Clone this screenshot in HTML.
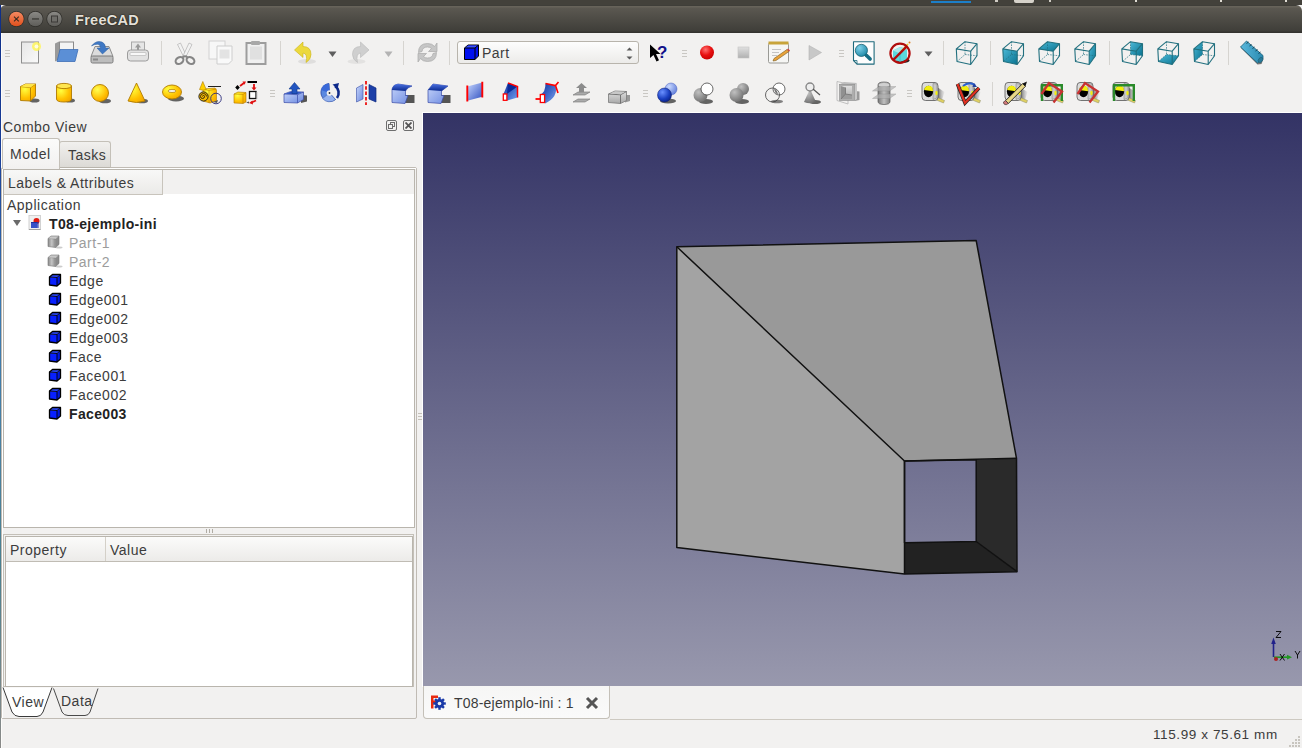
<!DOCTYPE html>
<html><head><meta charset="utf-8">
<style>
*{box-sizing:border-box}
html,body{margin:0;padding:0;width:1302px;height:748px;overflow:hidden;background:#f2f1f0;font-family:"Liberation Sans",sans-serif;color:#3c3c3c}
.a{position:absolute}
#toppanel{left:0;top:0;width:1302px;height:5px;background:#43413b}
#title{left:0;top:5px;width:1302px;height:28px;background:linear-gradient(#3f3e39 0px,#3f3e39 1px,#67635a 1px,#67635a 2px,#5b5851 3px,#3f3e39 26px,#34332f 27px);border-radius:6px 6px 0 0}
#leftstrip{left:0;top:5px;width:1px;height:743px;background:linear-gradient(#0e2e88 0%,#1a3e98 20%,#3a78b0 40%,#4a80a0 60%,#4a8090 75%,#8a8a88 100%)}
.wbtn{width:16px;height:16px;border-radius:50%;top:11px}
.ttl{left:75px;top:11.5px;font-size:14.5px;font-weight:bold;color:#e4e0d8;letter-spacing:0.3px;text-shadow:0 0 1.5px #1a1916,0 0 1px #1a1916}
#view{left:423px;top:113px;width:879px;height:573px;background:linear-gradient(#333365,#9898ad)}
.txt{font-size:14px;letter-spacing:0.5px;white-space:nowrap;line-height:17px}
</style></head><body>
<div class="a" id="toppanel"></div>
<div class="a" style="left:931px;top:1px;width:40px;height:2px;background:#1d7fc8"></div>
<div class="a" style="left:1014px;top:0;width:20px;height:3px;border-radius:0 0 2px 2px;background:#d6d2ca"></div>
<div class="a" style="left:995px;top:0;width:3px;height:2px;background:#cfcbc3"></div>
<div class="a" style="left:1049px;top:0;width:2px;height:2px;background:#cfcbc3"></div>
<div class="a" style="left:1135px;top:0;width:2px;height:2px;background:#e0dcd4"></div>
<div class="a" style="left:1220px;top:0;width:2px;height:2px;background:#e0dcd4"></div>
<div class="a" style="left:1285px;top:0;width:2px;height:2px;background:#e0dcd4"></div>
<div class="a" id="title"></div>
<div class="a" id="leftstrip"></div>
<svg class="a" style="left:0;top:5px" width="70" height="28">
<defs><linearGradient id="wclose" x1="0" y1="0" x2="0" y2="1"><stop offset="0" stop-color="#f58a62"/><stop offset="1" stop-color="#e0501c"/></linearGradient>
<linearGradient id="wgray" x1="0" y1="0" x2="0" y2="1"><stop offset="0" stop-color="#8a8985"/><stop offset="1" stop-color="#5e5d59"/></linearGradient></defs>
<circle cx="16.4" cy="14" r="8" fill="#2f2e2a"/><circle cx="16.4" cy="14" r="7.3" fill="url(#wclose)"/>
<path d="M14 11.6 L18.8 16.4 M18.8 11.6 L14 16.4" stroke="#3a2a20" stroke-width="1.1"/>
<circle cx="35.4" cy="14" r="8" fill="#2f2e2a"/><circle cx="35.4" cy="14" r="7.3" fill="url(#wgray)"/>
<rect x="32" y="13.3" width="7" height="1.3" fill="#3a3936"/>
<circle cx="54.4" cy="14" r="8" fill="#2f2e2a"/><circle cx="54.4" cy="14" r="7.3" fill="url(#wgray)"/>
<rect x="51.5" y="11" width="6" height="6" fill="#6e6d69" stroke="#3a3936" stroke-width="1"/>
</svg>
<div class="a ttl">FreeCAD</div>

<svg class="a" style="left:0;top:0" width="1302" height="113"><defs>
<linearGradient id="gpaper" x1="0" y1="0" x2="1" y2="1"><stop offset="0" stop-color="#e6e6e6"/><stop offset="1" stop-color="#fafafa"/></linearGradient>
<radialGradient id="gred" cx="0.4" cy="0.3" r="0.8"><stop offset="0" stop-color="#ff7070"/><stop offset="0.5" stop-color="#e81010"/><stop offset="1" stop-color="#c00000"/></radialGradient>
<linearGradient id="ggray" x1="0" y1="0" x2="0" y2="1"><stop offset="0" stop-color="#e0e0e0"/><stop offset="1" stop-color="#b0b0b0"/></linearGradient>
<radialGradient id="gteal" cx="0.35" cy="0.3" r="0.8"><stop offset="0" stop-color="#7fd0e8"/><stop offset="1" stop-color="#1784a2"/></radialGradient>
<linearGradient id="gcube" x1="0" y1="0" x2="1" y2="1"><stop offset="0" stop-color="#4bb8d6"/><stop offset="1" stop-color="#0a7390"/></linearGradient>
<radialGradient id="gyel" cx="0.3" cy="0.3" r="0.9"><stop offset="0" stop-color="#ffff40"/><stop offset="0.6" stop-color="#ffc000"/><stop offset="1" stop-color="#f0a000"/></radialGradient>
<radialGradient id="gyelr" cx="0.35" cy="0.3" r="0.8"><stop offset="0" stop-color="#ffff50"/><stop offset="0.7" stop-color="#ffbb00"/><stop offset="1" stop-color="#f0a000"/></radialGradient>
<linearGradient id="gblue2" x1="0" y1="0" x2="1" y2="1"><stop offset="0" stop-color="#c8d8ff"/><stop offset="1" stop-color="#3050c0"/></linearGradient>
<linearGradient id="gblue3" x1="0" y1="0" x2="1" y2="1"><stop offset="0" stop-color="#1030a0"/><stop offset="1" stop-color="#70a0f0"/></linearGradient>
<linearGradient id="ggray2" x1="0" y1="0" x2="0" y2="1"><stop offset="0" stop-color="#e0e0e0"/><stop offset="1" stop-color="#a8a8a8"/></linearGradient>
<radialGradient id="gblueL" cx="0.35" cy="0.3" r="0.8"><stop offset="0" stop-color="#c8d8ff"/><stop offset="1" stop-color="#5a78d8"/></radialGradient>
<radialGradient id="gblueD" cx="0.35" cy="0.3" r="0.8"><stop offset="0" stop-color="#6a90ff"/><stop offset="0.6" stop-color="#1a3fc0"/><stop offset="1" stop-color="#081e80"/></radialGradient>
<radialGradient id="ggrayB" cx="0.35" cy="0.3" r="0.8"><stop offset="0" stop-color="#c0c0c0"/><stop offset="1" stop-color="#6a6a6a"/></radialGradient>
<linearGradient id="ggrayC" x1="0" y1="0" x2="1" y2="0"><stop offset="0" stop-color="#777"/><stop offset="0.5" stop-color="#c0c0c0"/><stop offset="1" stop-color="#808080"/></linearGradient>
<linearGradient id="gruler" x1="0" y1="0" x2="1" y2="0"><stop offset="0" stop-color="#5ab8dc"/><stop offset="1" stop-color="#2a8ab0"/></linearGradient>
<linearGradient id="gtapesh" x1="0" y1="0" x2="1" y2="0"><stop offset="0" stop-color="#333"/><stop offset="1" stop-color="#ccc" stop-opacity="0.3"/></linearGradient>
<linearGradient id="gbox" x1="0" y1="0" x2="1" y2="1"><stop offset="0" stop-color="#c8d6fa"/><stop offset="1" stop-color="#6a88e0"/></linearGradient>
<linearGradient id="gbluetop" x1="0" y1="0" x2="0" y2="1"><stop offset="0" stop-color="#4a70e0"/><stop offset="1" stop-color="#0a2a90"/></linearGradient>
</defs><g fill="#c9c7c3"><rect x="5" y="50.0" width="5" height="1"/><rect x="5" y="53.0" width="5" height="1"/><rect x="5" y="56.0" width="5" height="1"/></g>
<g fill="#c9c7c3"><rect x="5" y="90.0" width="5" height="1"/><rect x="5" y="93.0" width="5" height="1"/><rect x="5" y="96.0" width="5" height="1"/></g>
<rect x="161" y="41" width="1" height="24" fill="#d6d4d0"/>
<rect x="280" y="41" width="1" height="24" fill="#d6d4d0"/>
<rect x="403" y="41" width="1" height="24" fill="#d6d4d0"/>
<rect x="449" y="41" width="1" height="24" fill="#d6d4d0"/>
<rect x="943" y="41" width="1" height="24" fill="#d6d4d0"/>
<rect x="990" y="41" width="1" height="24" fill="#d6d4d0"/>
<rect x="1109" y="41" width="1" height="24" fill="#d6d4d0"/>
<rect x="1228" y="41" width="1" height="24" fill="#d6d4d0"/>
<g fill="#c9c7c3"><rect x="682" y="50.0" width="5" height="1"/><rect x="682" y="53.0" width="5" height="1"/><rect x="682" y="56.0" width="5" height="1"/></g>
<g fill="#c9c7c3"><rect x="839" y="50.0" width="5" height="1"/><rect x="839" y="53.0" width="5" height="1"/><rect x="839" y="56.0" width="5" height="1"/></g>
<g fill="#c9c7c3"><rect x="270" y="90.0" width="5" height="1"/><rect x="270" y="93.0" width="5" height="1"/><rect x="270" y="96.0" width="5" height="1"/></g>
<g fill="#c9c7c3"><rect x="643" y="90.0" width="5" height="1"/><rect x="643" y="93.0" width="5" height="1"/><rect x="643" y="96.0" width="5" height="1"/></g>
<g fill="#c9c7c3"><rect x="907" y="90.0" width="5" height="1"/><rect x="907" y="93.0" width="5" height="1"/><rect x="907" y="96.0" width="5" height="1"/></g>
<rect x="992" y="82" width="1" height="24" fill="#d6d4d0"/>
<g transform="translate(18,40.5)"><rect x="3.5" y="1.5" width="17" height="21" fill="url(#gpaper)" stroke="#8e8e8e"/>
<circle cx="18.5" cy="6" r="4.5" fill="#fff65a" opacity="0.85"/><circle cx="18.5" cy="6" r="2" fill="#fffde0"/></g>
<g transform="translate(54,40.5)"><path d="M1 3 L5 1 L5 19 L1 21 Z" fill="#9a9a9a"/>
<rect x="5.5" y="1.5" width="14" height="12" fill="#f4f4f4" stroke="#8a8a8a"/>
<path d="M3 21 L6 9 L24 9 L21 21 Z" fill="#5b8fd6" stroke="#3d6fb6" stroke-width="0.8"/></g>
<g transform="translate(90,40.5)"><path d="M1 16 L5 6 L19 6 L23 16 Z" fill="#dcdcdc" stroke="#8c8c8c"/>
<rect x="1" y="15.5" width="22" height="7" rx="1.5" fill="#bdbdbd" stroke="#7d7d7d"/>
<rect x="3" y="18" width="5" height="2" fill="#8a8a8a"/>
<path d="M1.5 5.5 Q6 -0.5 12 1.5 Q15.5 3 15.5 7.5 L19 7.5 L12.5 13.5 L7 7.5 L10.5 7.5 Q10.5 4.5 8 3.8 Q4.5 3.5 1.5 5.5 Z" fill="#3f78c4" stroke="#2d5f9e" stroke-width="0.5"/></g>
<g transform="translate(126,40.5)"><rect x="5.5" y="1.5" width="13" height="10" fill="#e6e6e6" stroke="#a8a8a8"/>
<path d="M12 3 L15 7 L13 7 L13 10 L11 10 L11 7 L9 7Z" fill="#999"/>
<rect x="1.5" y="9.5" width="21" height="11" rx="3" fill="#e2e2e2" stroke="#9c9c9c"/>
<rect x="4" y="12" width="16" height="3" rx="1" fill="#f8f8f8" stroke="#b0b0b0" stroke-width="0.6"/></g>
<g transform="translate(173,40.5)"><path d="M4.5 4 L7.5 2.5 L13.5 15.5 L11 17 Z" fill="#f2f2f2" stroke="#a8a8a8" stroke-width="0.6"/>
<path d="M16 2.5 L19 4 L12.5 17 L10 15.5 Z" fill="#f2f2f2" stroke="#a8a8a8" stroke-width="0.6"/>
<ellipse cx="6.5" cy="20" rx="4.2" ry="3.1" fill="none" stroke="#858585" stroke-width="2.1" transform="rotate(-35 6.5 20)"/>
<ellipse cx="17.5" cy="20" rx="4.2" ry="3.1" fill="none" stroke="#858585" stroke-width="2.1" transform="rotate(35 17.5 20)"/>
<path d="M9.5 17 Q11 15 12 15.5 Q13 15 14.5 17" stroke="#858585" stroke-width="2" fill="none"/></g>
<g transform="translate(208.5,40.5)"><rect x="0.5" y="0.5" width="16" height="18" fill="#f7f7f7" stroke="#d2d2d2"/>
<path d="M8.5 5.5 L23.5 5.5 L23.5 20 L20 23.5 L8.5 23.5 Z" fill="#f9f9f9" stroke="#cdcdcd"/>
<rect x="11" y="9" width="10" height="9" fill="#e3e3e3"/></g>
<g transform="translate(245,40.5)"><rect x="1.5" y="2.5" width="19" height="21" fill="#f0f0f0" stroke="#9d9d9d" stroke-width="2"/>
<rect x="6" y="0.5" width="9" height="4" rx="1" fill="#a8a8a8"/>
<rect x="5" y="6" width="12" height="13" fill="#e0e0e0"/></g>
<g transform="translate(294,40.5)"><ellipse cx="13" cy="21" rx="9" ry="2.5" fill="#000" opacity="0.08"/>
<path d="M0.5 9.5 L9 1.5 L9 6 Q17 6 17 14 Q17 19 12 22 Q14 13 9 12.5 L9 17 Z" fill="#ecd93c" stroke="#c9b21a" stroke-width="0.6"/></g>
<path d="M328.5 51.5 L336.5 51.5 L332.5 57 Z" fill="#5e5e5e"/>
<g transform="translate(345.5,40.5)"><ellipse cx="11" cy="21" rx="9" ry="2.5" fill="#000" opacity="0.06"/>
<path d="M23.5 9.5 L15 1.5 L15 6 Q7 6 7 14 Q7 19 12 22 Q10 13 15 12.5 L15 17 Z" fill="#cfcfcf" stroke="#b8b8b8" stroke-width="0.6"/></g>
<path d="M384.5 51.5 L392.5 51.5 L388.5 57 Z" fill="#b3b3b3"/>
<g transform="translate(415.5,40.5)"><path d="M3 12 Q3 3 12 3 Q17 3 19 6 L21.5 2.5 L21.5 11 L13 11 L16 8 Q14.5 6.5 12 6.5 Q7 6.5 6.5 11 Z" fill="#c6c6c6" stroke="#a9a9a9" stroke-width="0.7"/>
<path d="M21 12 Q21 21 12 21 Q7 21 5 18 L2.5 21.5 L2.5 13 L11 13 L8 16 Q9.5 17.5 12 17.5 Q17 17.5 17.5 13 Z" fill="#c6c6c6" stroke="#a9a9a9" stroke-width="0.7"/></g>
<g transform="translate(646,40.5)"><path d="M4 4 L4 17.5 L7.5 14.5 L10.5 21 L13 19.8 L10 13.5 L14.5 13.5 Z" fill="#000"/>
<text x="11" y="17.5" font-family="Liberation Sans" font-weight="bold" font-size="17" fill="#12128a">?</text></g>
<g transform="translate(695,40.5)"><circle cx="12" cy="12" r="7" fill="url(#gred)"/></g>
<g transform="translate(731.5,40.5)"><rect x="6.5" y="6.5" width="11" height="11" fill="url(#ggray)" stroke="#c4c4c4" stroke-width="0.6"/></g>
<g transform="translate(767,40.5)"><rect x="1.5" y="2.5" width="20" height="20" rx="1.5" fill="#f6f6f4" stroke="#9a9a96"/>
<rect x="1.5" y="1" width="20" height="3" fill="#c8a43a"/>
<path d="M5 9 H14 M5 12 H12 M5 15 H10" stroke="#b8b8b8" stroke-width="0.8"/>
<path d="M7 18 L20 9 L22 11 L9 20 L6 20.5 Z" fill="#e8a23a" stroke="#7b5a1e" stroke-width="0.6"/>
<path d="M20 9 L22 11 L23 10 L21 8 Z" fill="#d04040"/></g>
<g transform="translate(803,40.5)"><path d="M6 5 L18.5 12 L6 19.5 Z" fill="#c8c8c8" stroke="#b4b4b4" stroke-width="0.6"/></g>
<g transform="translate(851.5,40.5)"><path d="M2 1.2 L22.6 1.2 L22.6 23.6 L5.5 23.6 L2 20 Z" fill="#fdfdfd" stroke="#1f6a7c" stroke-width="1.1" stroke-linejoin="round"/>
<path d="M2 20 L5.5 20 L5.5 23.6" fill="none" stroke="#1f6a7c" stroke-width="0.8"/>
<circle cx="9.9" cy="9.9" r="6.1" fill="url(#gteal)" stroke="#0f5566" stroke-width="0.7"/>
<path d="M14.8 14.8 L18.6 18.6" stroke="#156d84" stroke-width="3.6" stroke-linecap="round"/></g>
<g transform="translate(888,40.5)"><ellipse cx="15" cy="20" rx="6.5" ry="2.6" fill="#222"/>
<path d="M5 10 L12 6.5 L19 8.5 L19 19 L12 21.5 L5 18.5 Z" fill="#5cd8dc"/>
<path d="M5 10 L12 13 L19 8.5 L12 6.5 Z" fill="#a8e6e8"/>
<path d="M12 13 L12 21.5" stroke="#3ab0b8" stroke-width="0.6"/>
<path d="M13 11 L20 3.5" stroke="#f0d020" stroke-width="1.6"/><circle cx="21.5" cy="2" r="1" fill="#e08020"/>
<circle cx="12" cy="12.7" r="9.6" fill="none" stroke="#b00c0c" stroke-width="2.2"/>
<path d="M5.2 19.5 L18.8 5.9" stroke="#b00c0c" stroke-width="2.4"/></g>
<path d="M924.5 51.5 L932.5 51.5 L928.5 56.5 Z" fill="#5e5e5e"/>
<g transform="translate(953,40.5)"><polyline points="3.3,8.4 12,1.2 24,3.2 24,15.3 17.7,24 4,21 3.3,8.4 17.7,10.7 17.7,24" fill="none" stroke="#22707f" stroke-width="1.1" stroke-linejoin="round"/><path d="M17.7,10.7 L24,3.2" stroke="#22707f" stroke-width="1.1"/><path d="M12,1.2 L12,14 L4,21 M12,14 L24,15.3" stroke="#22707f" stroke-width="0.7" stroke-dasharray="1.6,1.1" fill="none"/></g>
<g transform="translate(999.5,40.5)"><polygon points="3.3,8.4 17.7,10.7 17.7,24 4,21" fill="url(#gcube)"/><polyline points="3.3,8.4 12,1.2 24,3.2 24,15.3 17.7,24 4,21 3.3,8.4 17.7,10.7 17.7,24" fill="none" stroke="#22707f" stroke-width="1.1" stroke-linejoin="round"/><path d="M17.7,10.7 L24,3.2" stroke="#22707f" stroke-width="1.1"/><path d="M12,1.2 L12,14 L4,21 M12,14 L24,15.3" stroke="#22707f" stroke-width="0.7" stroke-dasharray="1.6,1.1" fill="none"/></g>
<g transform="translate(1035.5,40.5)"><polygon points="12,1.2 24,3.2 17.7,10.7 3.3,8.4" fill="url(#gcube)"/><polyline points="3.3,8.4 12,1.2 24,3.2 24,15.3 17.7,24 4,21 3.3,8.4 17.7,10.7 17.7,24" fill="none" stroke="#22707f" stroke-width="1.1" stroke-linejoin="round"/><path d="M17.7,10.7 L24,3.2" stroke="#22707f" stroke-width="1.1"/><path d="M12,1.2 L12,14 L4,21 M12,14 L24,15.3" stroke="#22707f" stroke-width="0.7" stroke-dasharray="1.6,1.1" fill="none"/></g>
<g transform="translate(1071.5,40.5)"><polygon points="17.7,10.7 24,3.2 24,15.3 17.7,24" fill="url(#gcube)"/><polyline points="3.3,8.4 12,1.2 24,3.2 24,15.3 17.7,24 4,21 3.3,8.4 17.7,10.7 17.7,24" fill="none" stroke="#22707f" stroke-width="1.1" stroke-linejoin="round"/><path d="M17.7,10.7 L24,3.2" stroke="#22707f" stroke-width="1.1"/><path d="M12,1.2 L12,14 L4,21 M12,14 L24,15.3" stroke="#22707f" stroke-width="0.7" stroke-dasharray="1.6,1.1" fill="none"/></g>
<g transform="translate(1118.5,40.5)"><polygon points="12,1.2 24,3.2 24,15.3 12,14" fill="url(#gcube)"/><polyline points="3.3,8.4 12,1.2 24,3.2 24,15.3 17.7,24 4,21 3.3,8.4 17.7,10.7 17.7,24" fill="none" stroke="#22707f" stroke-width="1.1" stroke-linejoin="round"/><path d="M17.7,10.7 L24,3.2" stroke="#22707f" stroke-width="1.1"/><path d="M12,1.2 L12,14 L4,21 M12,14 L24,15.3" stroke="#22707f" stroke-width="0.7" stroke-dasharray="1.6,1.1" fill="none"/></g>
<g transform="translate(1154.5,40.5)"><polygon points="4,21 17.7,24 24,15.3 12,14" fill="url(#gcube)"/><polyline points="3.3,8.4 12,1.2 24,3.2 24,15.3 17.7,24 4,21 3.3,8.4 17.7,10.7 17.7,24" fill="none" stroke="#22707f" stroke-width="1.1" stroke-linejoin="round"/><path d="M17.7,10.7 L24,3.2" stroke="#22707f" stroke-width="1.1"/><path d="M12,1.2 L12,14 L4,21 M12,14 L24,15.3" stroke="#22707f" stroke-width="0.7" stroke-dasharray="1.6,1.1" fill="none"/></g>
<g transform="translate(1190.5,40.5)"><polygon points="12,1.2 3.3,8.4 4,21 12,14" fill="url(#gcube)"/><polyline points="3.3,8.4 12,1.2 24,3.2 24,15.3 17.7,24 4,21 3.3,8.4 17.7,10.7 17.7,24" fill="none" stroke="#22707f" stroke-width="1.1" stroke-linejoin="round"/><path d="M17.7,10.7 L24,3.2" stroke="#22707f" stroke-width="1.1"/><path d="M12,1.2 L12,14 L4,21 M12,14 L24,15.3" stroke="#22707f" stroke-width="0.7" stroke-dasharray="1.6,1.1" fill="none"/></g>
<g transform="translate(1239.5,40.5)"><path d="M1 7 L7 3 L24 18 L22 23.5 L18 24 Z" fill="#555" opacity="0.8"/>
<path d="M1 6.5 L7 0.5 L23.5 15 L23.5 18 L18 22.5 Z" fill="url(#gruler)" stroke="#1a5f78" stroke-width="0.8"/>
<path d="M7 3 L9 1.5 M10 5.5 L12 4 M13 8 L15 6.5 M16 10.5 L18 9 M19 13 L21 11.5" stroke="#103848" stroke-width="0.9"/>
<ellipse cx="21" cy="19.5" rx="2" ry="2.8" fill="#2a7a98" stroke="#1a5f78" stroke-width="0.6" transform="rotate(40 21 19.5)"/></g>
<g transform="translate(17.5,81)"><ellipse cx="17" cy="19.5" rx="5" ry="2" fill="#333" opacity="0.75"/><path d="M3 5.5 L8 3 L18 3 L18 15 L13 20 L3 19.5 Z" fill="url(#gyel)" stroke="#b07a00" stroke-width="0.9"/>
<path d="M3 5.5 L13 6.5 L18 3 M13 6.5 L13 20" stroke="#b07a00" stroke-width="0.9" fill="none"/>
<path d="M3 5.5 L13 6.5 L18 3 L8 3 Z" fill="#ffe54a"/></g>
<g transform="translate(53,81)"><ellipse cx="17" cy="19.5" rx="5" ry="2" fill="#333" opacity="0.75"/><path d="M3.5 5 L3.5 18 Q3.5 21 11 21 Q18.5 21 18.5 18 L18.5 5 Z" fill="url(#gyel)" stroke="#b07a00" stroke-width="0.9"/>
<ellipse cx="11" cy="5" rx="7.5" ry="2.6" fill="#ffe650" stroke="#b07a00" stroke-width="0.9"/></g>
<g transform="translate(89,81)"><ellipse cx="16" cy="20" rx="6" ry="2.3" fill="#333" opacity="0.75"/><circle cx="11" cy="12" r="8.5" fill="url(#gyelr)" stroke="#b07a00" stroke-width="0.9"/></g>
<g transform="translate(125,81)"><ellipse cx="17" cy="20" rx="6" ry="2.3" fill="#333" opacity="0.75"/><path d="M11.5 2 L3 20 Q11 23 20 20 Z" fill="url(#gyel)" stroke="#b07a00" stroke-width="0.9"/></g>
<g transform="translate(161,81)"><ellipse cx="15" cy="17.5" rx="8" ry="3" fill="#333" opacity="0.75"/><ellipse cx="11" cy="11" rx="9.5" ry="7" fill="url(#gyel)" stroke="#b07a00" stroke-width="0.9"/>
<ellipse cx="11" cy="10" rx="4" ry="1.6" fill="#f2f0e8" stroke="#b07a00" stroke-width="0.7"/></g>
<g transform="translate(197,81)"><path d="M6 8 L18 7 L19.5 9 L19.5 20 L13 22 L6 20 Z" fill="url(#gyel)" stroke="#b07a00" stroke-width="0.6"/>
<path d="M6 8 L12 9.5 L19.5 8 M12 9.5 V22" stroke="#b07a00" stroke-width="0.5" fill="none"/>
<path d="M5.8 0.5 L2.5 8.5 Q6 10 9.2 8.5 Z" fill="#ffd000" stroke="#b07a00" stroke-width="0.6"/>
<path d="M11 5.5 H24" stroke="#222" stroke-width="1"/>
<circle cx="6.5" cy="15.5" r="4.6" fill="#f5b800" stroke="#111" stroke-width="0.9"/>
<path d="M6.5 15.5 m-1 0 a1 1 0 1 1 2 0 a2 2 0 1 1 -4 0 a3 3 0 1 1 6 0" stroke="#111" stroke-width="0.8" fill="none"/>
<path d="M16 21 L21 19 L20 22 Z" fill="#555"/>
<circle cx="19" cy="17.5" r="5.3" fill="none" stroke="#2a2a7a" stroke-width="0.9"/></g>
<g transform="translate(233,81)"><path d="M1 13 L5 11 L13 11.5 L13 21 L10 22.5 L1 22 Z" fill="url(#gyel)" stroke="#b07a00" stroke-width="0.6"/>
<path d="M1 13 L10 13.5 L13 11.5 M10 13.5 V22.5" stroke="#b07a00" stroke-width="0.5" fill="none"/>
<path d="M13 21.5 L16 20.5 L16 22.5 Z" fill="#555"/>
<path d="M4.5 4 L6.8 6.5 L4.5 9 L2.2 6.5 Z" fill="#000"/>
<path d="M7 5 L11 2" stroke="#e01010" stroke-width="1.8"/><path d="M9.5 0.5 L13 0.5 L11.5 3.8Z" fill="#e01010"/>
<path d="M14.5 1 H24" stroke="#000" stroke-width="2"/>
<path d="M21 3 V7" stroke="#e01010" stroke-width="1.8"/><path d="M18.5 6.5 L23.5 6.5 L21 9.5Z" fill="#e01010"/>
<rect x="16.5" y="10.5" width="6.5" height="7" fill="#fff" stroke="#111" stroke-width="1.3"/>
<rect x="23.2" y="11" width="1" height="7" fill="#999"/>
<path d="M23 19.5 L18.5 21.5" stroke="#e01010" stroke-width="1.8"/><path d="M19.5 19.5 L16 22 L20 23.5Z" fill="#e01010"/></g>
<g transform="translate(282,81)"><path d="M19 14 L25 14.5 L25 20.5 L19 22 Z" fill="#555"/>
<path d="M2 13 L8.5 10.5 L21.5 11 L21.5 18.5 L15.5 22 L2 21.5 Z" fill="url(#gbox)" stroke="#3a4aa8" stroke-width="0.7"/>
<path d="M2 13 L15.5 13.7 L21.5 11 M15.5 13.7 L15.5 22" stroke="#3a4aa8" stroke-width="0.7" fill="none"/>
<path d="M3 12.8 L8.7 10.8 L20 11.3 L15.3 13.3 Z" fill="#2a50c0"/>
<path d="M10 12.5 L10 8 L7 8 L12.5 1.5 L18 8 L15 8 L15 12.5 Z" fill="#2255c0" stroke="#123a8a" stroke-width="0.6"/></g>
<g transform="translate(318,81)"><path d="M11 2.5 A9 9 0 1 0 17.5 18.5 L11.5 12 Z" fill="#5a88e0" stroke="#1d3b9a" stroke-width="0.7"/>
<path d="M4.5 17.5 A9 9 0 0 0 17.5 18.5 L11.5 12 Z" fill="#95b2ee" stroke="#4060b0" stroke-width="0.5"/>
<path d="M11 2.5 A9 9 0 0 0 3 9 L11.5 12 Z" fill="#3a6ad8"/>
<circle cx="11.5" cy="12" r="2.8" fill="#f2f1f0"/><circle cx="11.5" cy="12" r="0.9" fill="#222"/>
<path d="M17 5 A8.5 8.5 0 0 1 19 17" stroke="#0e2a8a" stroke-width="2.6" fill="none"/><path d="M14.5 3.5 L21 2 L19.5 8 Z" fill="#0e2a8a"/></g>
<g transform="translate(354,81)"><path d="M2.5 7 L9 3.5 L9 18 L2.5 21 Z" fill="url(#gbox)" stroke="#4a60b0" stroke-width="0.7"/>
<path d="M15 3.5 L22 7 L22 21 L15 18 Z" fill="#1c3fa8" stroke="#0e2a80" stroke-width="0.7"/>
<path d="M12 0 V24" stroke="#ee1010" stroke-width="1.8" stroke-dasharray="3.5,1.8"/></g>
<g transform="translate(390,81)"><path d="M14 14 L24.5 14 L24.5 22 L14 22 Z" fill="#555"/>
<path d="M2 8 Q3 3.5 8 3 L22 5 Q17 6.5 15.5 10 L15.5 14.5 L18 14.5 L15 22.5 L2 21.5 Z" fill="url(#gbox)" stroke="#3a4aa8" stroke-width="0.7"/>
<path d="M2 8 Q3 3.5 8 3 L22 5 Q17 6.5 15.5 10 L2 9 Z" fill="url(#gbluetop)"/></g>
<g transform="translate(426,81)"><path d="M14 14 L24.5 14 L24.5 22 L14 22 Z" fill="#555"/>
<path d="M2 9 L7 3 L22 5 L15.5 10 L15.5 14.5 L18 14.5 L15 22.5 L2 21.5 Z" fill="url(#gbox)" stroke="#3a4aa8" stroke-width="0.7"/>
<path d="M2 9 L7 3 L22 5 L15.5 10 Z" fill="url(#gbluetop)"/></g>
<g transform="translate(462,81)"><path d="M5.3 5.5 L20.3 1.6 L20.3 15.8 L5.3 19.7 Z" fill="url(#gblue2)"/>
<path d="M5.3 4.5 V20.5 M20.3 0.8 V16.5" stroke="#ff0000" stroke-width="1.9"/></g>
<g transform="translate(498,81)"><path d="M10 2 L19.5 5.5 L19.5 16.5 L9 19.5 L5.5 13 Z" fill="url(#gblue3)"/>
<path d="M10 2 L19.5 5.5 L9 13 Z" fill="#0a2a9a"/>
<path d="M10 2 L19.5 5.5 L19.5 16.5" stroke="#ff0000" stroke-width="1.5" fill="none"/>
<rect x="5.3" y="13" width="3.6" height="6.3" fill="#fff" stroke="#ff0000" stroke-width="1.3"/></g>
<g transform="translate(534,81)"><path d="M11.5 2.5 L21.5 4.5 Q24.5 16 11 22.5 L6.5 13.5 Q11.5 11 11.5 2.5 Z" fill="url(#gblue3)"/>
<path d="M11.5 2.5 L21.5 4.5 L24.5 1 M21.5 4.5 L24 12" stroke="#ff0000" stroke-width="1.6" fill="none"/>
<path d="M20 10 Q18 17 12 20" stroke="#8080c0" stroke-width="0.6" stroke-dasharray="1.5,1" fill="none"/>
<rect x="6.3" y="13.5" width="4.3" height="8" fill="#fff" stroke="#ff0000" stroke-width="1.3"/>
<path d="M1.5 18 H6.5" stroke="#ff0000" stroke-width="1.8"/></g>
<g transform="translate(570,81)"><path d="M3 14 L8 11 L20 11 L15 14 Z" fill="#aaa" stroke="#777" stroke-width="0.6"/>
<path d="M3 21 L8 18 L20 18 L15 21 Z" fill="#aaa" stroke="#777" stroke-width="0.6"/>
<path d="M9 11 L9 7 L6 7 L11.5 2 L17 7 L14 7 L14 11 Z" fill="#8c8c8c"/></g>
<g transform="translate(607,81)"><path d="M18 14 L23 14 L23 20 L18 21.5 Z" fill="#999"/>
<path d="M1.5 13 L8 10 L19.5 10.5 L19.5 19.5 L13.5 22.5 L1.5 21.5 Z" fill="url(#ggray2)" stroke="#7a7a7a" stroke-width="0.8"/>
<path d="M1.5 13 L13.5 13.8 L19.5 10.5 M13.5 13.8 L13.5 22.5" stroke="#6a6a6a" stroke-width="0.9" fill="none"/>
<path d="M3 12.5 L8.3 10.6 L18 11 L13.3 13.2 Z" fill="#c8c8c8"/></g>
<g transform="translate(656,81)"><ellipse cx="12" cy="20" rx="8" ry="2.5" fill="#333" opacity="0.75"/><circle cx="15" cy="8" r="6" fill="url(#gblueL)" stroke="#4a60c0" stroke-width="0.5"/>
<circle cx="8.5" cy="14" r="7" fill="url(#gblueD)" stroke="#0a1a70" stroke-width="0.5"/></g>
<g transform="translate(692,81)"><ellipse cx="14" cy="20.5" rx="7" ry="2.5" fill="#333" opacity="0.75"/><circle cx="8.5" cy="14" r="7" fill="url(#ggrayB)"/>
<circle cx="15" cy="8" r="6" fill="#fff" stroke="#444" stroke-width="0.8"/></g>
<g transform="translate(728,81)"><ellipse cx="14" cy="20.5" rx="7" ry="2.5" fill="#333" opacity="0.75"/><circle cx="15" cy="8" r="6" fill="url(#ggrayB)"/>
<circle cx="8.5" cy="14" r="7" fill="url(#ggrayB)"/></g>
<g transform="translate(764,81)"><circle cx="15" cy="8" r="6" fill="#fff" stroke="#444" stroke-width="0.8"/>
<circle cx="8.5" cy="14" r="7" fill="none" stroke="#444" stroke-width="0.8"/>
<path d="M10 7.5 Q13 8 14 13.5 Q11 13 10 7.5 Z" fill="#777"/>
<ellipse cx="13" cy="20.5" rx="6" ry="1.8" fill="#333" opacity="0.6"/></g>
<g transform="translate(800,81)"><ellipse cx="15" cy="21" rx="6" ry="2" fill="#333" opacity="0.75"/><path d="M10 8 L4 21 Q10 23.5 16 21 Z" fill="url(#ggrayB)"/>
<circle cx="10" cy="6" r="4" fill="#eee" stroke="#888" stroke-width="1.4"/>
<path d="M13 8 L20 14" stroke="#555" stroke-width="1.2"/></g>
<g transform="translate(836,81)"><path d="M19 10 L23.5 10.5 L23.5 19 L19 20 Z" fill="#999"/>
<path d="M1 0.5 L12 3 L12 23 L1 19.5 Z" fill="none" stroke="#b4b4b4" stroke-width="0.8"/>
<path d="M3.5 3.5 L8 1 L21 2 L19 4 Z" fill="#bdbdbd"/>
<rect x="3.5" y="3.5" width="15.5" height="16" fill="#adadad" stroke="#8a8a8a" stroke-width="0.6"/>
<rect x="5" y="5" width="11" height="13" fill="url(#ggray2)"/>
<path d="M5 5 L9.5 6.5 L9.5 13 L5 18 Z" fill="#909090"/>
<path d="M9.5 13 L16 14 L16 18 L5 18 Z" fill="#9c9c9c"/>
<path d="M9.5 6.5 V13 L5 18 M9.5 13 L16 14" stroke="#6a6a6a" stroke-width="0.7" fill="none"/>
<path d="M19 4 L21 2 L21 18 L19 19.5 Z" fill="#c8c8c8"/></g>
<g transform="translate(872,81)"><path d="M6 4 Q6 1 12 1 Q18 1 18 4 L18 20.5 Q18 23.5 12 23.5 Q6 23.5 6 20.5 Z" fill="url(#ggrayC)" stroke="#5a5a5a" stroke-width="0.7"/>
<path d="M6.5 4 Q6.5 2 12 2 Q17.5 2 17.5 4 Q17.5 6 12 6 Q6.5 6 6.5 4 Z" fill="#d0d0d0"/>
<path d="M0.5 10 L7 5.5 L24 5.5 L17.5 10 Z" fill="#b0b0b0" opacity="0.7" stroke="#8a8a8a" stroke-width="0.5"/>
<path d="M0.5 17.5 L7 13 L24 13 L17.5 17.5 Z" fill="#b0b0b0" opacity="0.7" stroke="#8a8a8a" stroke-width="0.5"/></g>
<g transform="translate(920,81)"><path d="M17 6 L24.5 11 L22 19 L16 19 Z" fill="url(#gtapesh)"/>
<path d="M15 15.5 L24.5 19.5 L23.5 22 L14 18 Z" fill="#e0d060" stroke="#8a8a6a" stroke-width="0.5"/>
<path d="M5 1.5 Q2 1.5 2 5 L2 16 Q2 19.5 5.5 19.5 L15 19.5 Q18 19.5 18 16 L18 5 Q18 1.5 15 1.5 Z" fill="#dcdcdc" stroke="#555" stroke-width="0.8"/>
<path d="M13 2.5 L17 3 L17 17 L13 18.5 Z" fill="#c8c8c8" stroke="#777" stroke-width="0.5"/>
<ellipse cx="8.5" cy="10.5" rx="4.6" ry="5.8" fill="#000"/>
<path d="M4 9.5 Q4.5 4.7 8.5 4.7 Q12.5 4.7 13 9.5 Z" fill="#f2ee10" transform="rotate(8 8.5 10)"/>
<ellipse cx="16.5" cy="12" rx="1.2" ry="2.2" fill="#f2ee10"/></g>
<g transform="translate(956,81)"><path d="M17 6 L24.5 11 L22 19 L16 19 Z" fill="url(#gtapesh)"/>
<path d="M15 15.5 L24.5 19.5 L23.5 22 L14 18 Z" fill="#e0d060" stroke="#8a8a6a" stroke-width="0.5"/>
<path d="M5 1.5 Q2 1.5 2 5 L2 16 Q2 19.5 5.5 19.5 L15 19.5 Q18 19.5 18 16 L18 5 Q18 1.5 15 1.5 Z" fill="#dcdcdc" stroke="#555" stroke-width="0.8"/>
<path d="M13 2.5 L17 3 L17 17 L13 18.5 Z" fill="#c8c8c8" stroke="#777" stroke-width="0.5"/>
<ellipse cx="8.5" cy="10.5" rx="4.6" ry="5.8" fill="#000"/>
<path d="M4 9.5 Q4.5 4.7 8.5 4.7 Q12.5 4.7 13 9.5 Z" fill="#f2ee10" transform="rotate(8 8.5 10)"/>
<ellipse cx="16.5" cy="12" rx="1.2" ry="2.2" fill="#f2ee10"/><path d="M1.5 3 L9 22 L23 7" stroke="#222" stroke-width="3.6" fill="none"/><path d="M1.5 3 L9 22 L23 7" stroke="#e03020" stroke-width="2.2" fill="none"/><path d="M7 5 Q13 0 19 4" stroke="#2a60d0" stroke-width="2" fill="none"/><path d="M18 2 L21 6 L16.5 6 Z" fill="#2040a0"/></g>
<g transform="translate(1003,81)"><path d="M17 6 L24.5 11 L22 19 L16 19 Z" fill="url(#gtapesh)"/>
<path d="M15 15.5 L24.5 19.5 L23.5 22 L14 18 Z" fill="#e0d060" stroke="#8a8a6a" stroke-width="0.5"/>
<path d="M5 1.5 Q2 1.5 2 5 L2 16 Q2 19.5 5.5 19.5 L15 19.5 Q18 19.5 18 16 L18 5 Q18 1.5 15 1.5 Z" fill="#dcdcdc" stroke="#555" stroke-width="0.8"/>
<path d="M13 2.5 L17 3 L17 17 L13 18.5 Z" fill="#c8c8c8" stroke="#777" stroke-width="0.5"/>
<ellipse cx="8.5" cy="10.5" rx="4.6" ry="5.8" fill="#000"/>
<path d="M4 9.5 Q4.5 4.7 8.5 4.7 Q12.5 4.7 13 9.5 Z" fill="#f2ee10" transform="rotate(8 8.5 10)"/>
<ellipse cx="16.5" cy="12" rx="1.2" ry="2.2" fill="#f2ee10"/><path d="M2.6 19.6 L19.6 2.6 L22.4 5.4 L5.4 22.4 Z" fill="#e8d888" stroke="#222" stroke-width="0.9"/><path d="M19.6 2.6 L24 0.5 L22.4 5.4 Z" fill="#111"/><path d="M2.6 19.6 L5.4 22.4 Q3 25 1 23 Q-1 21 2.6 19.6 Z" fill="#d07878" stroke="#333" stroke-width="0.6"/></g>
<g transform="translate(1039,81)"><path d="M17 6 L24.5 11 L22 19 L16 19 Z" fill="url(#gtapesh)"/>
<path d="M15 15.5 L24.5 19.5 L23.5 22 L14 18 Z" fill="#e0d060" stroke="#8a8a6a" stroke-width="0.5"/>
<path d="M5 1.5 Q2 1.5 2 5 L2 16 Q2 19.5 5.5 19.5 L15 19.5 Q18 19.5 18 16 L18 5 Q18 1.5 15 1.5 Z" fill="#dcdcdc" stroke="#555" stroke-width="0.8"/>
<path d="M13 2.5 L17 3 L17 17 L13 18.5 Z" fill="#c8c8c8" stroke="#777" stroke-width="0.5"/>
<ellipse cx="8.5" cy="10.5" rx="4.6" ry="5.8" fill="#000"/>
<path d="M4 9.5 Q4.5 4.7 8.5 4.7 Q12.5 4.7 13 9.5 Z" fill="#f2ee10" transform="rotate(8 8.5 10)"/>
<ellipse cx="16.5" cy="12" rx="1.2" ry="2.2" fill="#f2ee10"/><path d="M3 20 V4.2 H22.8 V20" stroke="#2a8a2a" stroke-width="2.4" fill="none"/><path d="M2.5 13 L10 2 L23 10.5 L14.5 21.5" stroke="#c83232" stroke-width="2.3" fill="none"/></g>
<g transform="translate(1075,81)"><path d="M17 6 L24.5 11 L22 19 L16 19 Z" fill="url(#gtapesh)"/>
<path d="M15 15.5 L24.5 19.5 L23.5 22 L14 18 Z" fill="#e0d060" stroke="#8a8a6a" stroke-width="0.5"/>
<path d="M5 1.5 Q2 1.5 2 5 L2 16 Q2 19.5 5.5 19.5 L15 19.5 Q18 19.5 18 16 L18 5 Q18 1.5 15 1.5 Z" fill="#dcdcdc" stroke="#555" stroke-width="0.8"/>
<path d="M13 2.5 L17 3 L17 17 L13 18.5 Z" fill="#c8c8c8" stroke="#777" stroke-width="0.5"/>
<ellipse cx="8.5" cy="10.5" rx="4.6" ry="5.8" fill="#000"/>
<path d="M4 9.5 Q4.5 4.7 8.5 4.7 Q12.5 4.7 13 9.5 Z" fill="#f2ee10" transform="rotate(8 8.5 10)"/>
<ellipse cx="16.5" cy="12" rx="1.2" ry="2.2" fill="#f2ee10"/><path d="M2.5 13 L10 2 L23 10.5 L14.5 21.5" stroke="#c83232" stroke-width="2.3" fill="none"/></g>
<g transform="translate(1111,81)"><path d="M17 6 L24.5 11 L22 19 L16 19 Z" fill="url(#gtapesh)"/>
<path d="M15 15.5 L24.5 19.5 L23.5 22 L14 18 Z" fill="#e0d060" stroke="#8a8a6a" stroke-width="0.5"/>
<path d="M5 1.5 Q2 1.5 2 5 L2 16 Q2 19.5 5.5 19.5 L15 19.5 Q18 19.5 18 16 L18 5 Q18 1.5 15 1.5 Z" fill="#dcdcdc" stroke="#555" stroke-width="0.8"/>
<path d="M13 2.5 L17 3 L17 17 L13 18.5 Z" fill="#c8c8c8" stroke="#777" stroke-width="0.5"/>
<ellipse cx="8.5" cy="10.5" rx="4.6" ry="5.8" fill="#000"/>
<path d="M4 9.5 Q4.5 4.7 8.5 4.7 Q12.5 4.7 13 9.5 Z" fill="#f2ee10" transform="rotate(8 8.5 10)"/>
<ellipse cx="16.5" cy="12" rx="1.2" ry="2.2" fill="#f2ee10"/><path d="M3 20 V4.2 H22.8 V20" stroke="#2a8a2a" stroke-width="2.4" fill="none"/></g></svg>
<!-- combo box -->
<div class="a" style="left:457px;top:41px;width:182px;height:23px;border:1px solid #b8b4ac;border-radius:3px;background:linear-gradient(#fdfdfd,#ecebe9)"></div>
<svg class="a" style="left:463px;top:44px" width="17" height="17"><path d="M1.5 4 L5 1 L15.5 1 L15.5 12 L12 15.5 L1.5 15.5 Z" fill="#0010f0" stroke="#000" stroke-width="1"/><path d="M2 4 L5 1.5 L15 1.5 L12 4 Z" fill="#3a50ff"/><path d="M1.5 4 L12 4 L15.5 1 M12 4 L12 15.5" stroke="#000" stroke-width="1" fill="none"/></svg>
<div class="a txt" style="left:482px;top:45px">Part</div>
<svg class="a" style="left:625px;top:46px" width="9" height="15"><path d="M1.5 4.5 L4.5 1.5 L7.5 4.5 Z M1.5 10.5 L4.5 13.5 L7.5 10.5 Z" fill="#5a5a5a"/></svg>

<!-- 3D view -->
<div class="a" style="left:422px;top:112px;width:880px;height:1px;background:#fff"></div>
<div class="a" style="left:422px;top:112px;width:1px;height:575px;background:#fff"></div>
<div class="a" id="view"></div>
<svg class="a" style="left:0;top:0" width="1302" height="748">
<polygon points="676.8,246.8 904.5,461 904.5,574 676.8,547.6" fill="#a3a3a3"/>
<polygon points="676.8,246.8 976.2,240.6 1016.5,458.3 976.2,459.8 904.5,461" fill="#999999"/>
<polygon points="976.2,459.8 1016.5,458.3 1017,571.7 976.2,541.5" fill="#2a2a2a"/>
<polygon points="904.5,542.8 976.2,541.5 1017,571.7 904.5,574" fill="#222222"/>
<g fill="none" stroke="#111" stroke-width="1.5" stroke-linejoin="round">
<polygon points="676.8,246.8 976.2,240.6 1016.5,458.3 1017,571.7 904.5,574 676.8,547.6"/>
<polyline points="676.8,246.8 904.5,461 1016.5,458.3"/>
<polyline points="904.5,461 904.5,574"/>
<polygon points="904.5,461 976.2,459.8 976.2,541.5 904.5,542.8"/>
<line x1="976.2" y1="541.5" x2="1017" y2="571.7"/>
</g>
<!-- axis -->
<g>
<path d="M1273.5 657 V642" stroke="#22228a" stroke-width="1.6"/>
<path d="M1271.2 644 L1273.5 637.5 L1275.8 644 Z" fill="#22228a"/>
<path d="M1274 657.2 H1290" stroke="#229922" stroke-width="1.6"/>
<path d="M1287 654.8 L1292 657.2 L1287 659.6 Z" fill="#229922"/>
<circle cx="1276" cy="659" r="2" fill="#aa2222"/>
<path d="M1276 631.5 H1281 L1276 637.5 H1281" stroke="#000" stroke-width="0.9" fill="none"/>
<path d="M1280 654 L1284.5 660.5 M1284.5 654 L1280 660.5" stroke="#000" stroke-width="0.9"/>
<path d="M1295 651 L1297.5 655 L1300 651 M1297.5 655 V658.5" stroke="#000" stroke-width="0.9" fill="none"/>
</g>
</svg>


<!-- left dock -->
<div class="a txt" style="left:3px;top:118.5px">Combo View</div>
<div class="a" style="left:386px;top:120px;width:11px;height:11px;border:1px solid #6e6e6e;border-radius:2px"><div class="a" style="left:3px;top:1px;width:5px;height:5px;border:1px solid #6e6e6e"></div><div class="a" style="left:1px;top:3px;width:5px;height:5px;border:1px solid #6e6e6e;background:#f2f1f0"></div></div>
<div class="a" style="left:403px;top:120px;width:11px;height:11px;border:1px solid #6e6e6e;border-radius:2px"><svg class="a" style="left:1px;top:1px" width="7" height="7"><path d="M0.5 0.5 L6.5 6.5 M6.5 0.5 L0.5 6.5" stroke="#555" stroke-width="1.8"/></svg></div>
<!-- pane -->
<div class="a" style="left:1px;top:33px;width:1px;height:715px;background:#fdfcfa"></div>
<div class="a" style="left:1px;top:167px;width:416px;height:552px;border:1px solid #c0bbb4;border-radius:2px;background:#f2f1f0"></div>
<div class="a" style="left:2px;top:168px;width:414px;height:1px;background:#fff"></div>
<div class="a" style="left:2px;top:168px;width:1px;height:550px;background:#fff"></div>
<!-- tabs -->
<div class="a" style="left:59px;top:141px;width:52px;height:27px;border:1px solid #c4c0b8;border-bottom:1px solid #b8b4ac;border-radius:3px 3px 0 0;background:linear-gradient(#f1f0ee,#dcdad6)"></div>
<div class="a" style="left:2px;top:138px;width:58px;height:31px;border:1px solid #c4c0b8;border-bottom:none;border-radius:3px 3px 0 0;background:linear-gradient(#fbfbfa,#f2f1f0)"></div>
<div class="a" style="left:3px;top:167px;width:56px;height:2px;background:#f2f1f0"></div>
<div class="a txt" style="left:10px;top:146px">Model</div>
<div class="a txt" style="left:68px;top:147px">Tasks</div>
<!-- tree frame -->
<div class="a" style="left:3px;top:169px;width:412px;height:359px;border:1px solid #b9b5ad;background:#fff"></div>
<div class="a" style="left:4px;top:170px;width:410px;height:24px;background:#f2f1f0"></div>
<div class="a" style="left:4px;top:170px;width:159px;height:25px;border-right:1px solid #c8c4bc;border-bottom:1px solid #c8c4bc;background:linear-gradient(#f8f8f7,#ebeae8)"></div>
<div class="a txt" style="left:8px;top:175px">Labels &amp; Attributes</div>
<div class="a txt" style="left:7px;top:197px">Application</div>
<div class="a" style="left:13px;top:220px;width:0;height:0;border-left:4px solid transparent;border-right:4px solid transparent;border-top:6px solid #6a6a6a"></div>
<div class="a txt" style="left:49px;top:216px;font-weight:bold;color:#222;letter-spacing:0.35px">T08-ejemplo-ini</div>
<div class="a txt" style="left:69px;top:235px;color:#9c9c9c">Part-1</div>
<div class="a txt" style="left:69px;top:254px;color:#9c9c9c">Part-2</div>
<div class="a txt" style="left:69px;top:273px">Edge</div>
<div class="a txt" style="left:69px;top:292px">Edge001</div>
<div class="a txt" style="left:69px;top:311px">Edge002</div>
<div class="a txt" style="left:69px;top:330px">Edge003</div>
<div class="a txt" style="left:69px;top:349px">Face</div>
<div class="a txt" style="left:69px;top:368px">Face001</div>
<div class="a txt" style="left:69px;top:387px">Face002</div>
<div class="a txt" style="left:69px;top:406px;font-weight:bold;color:#222;letter-spacing:0.35px">Face003</div>
<svg class="a" style="left:0;top:0" width="430" height="430"><defs><linearGradient id="tgray" x1="0" y1="0" x2="1" y2="0"><stop offset="0" stop-color="#8a8a8a"/><stop offset="0.5" stop-color="#c4c4c4"/><stop offset="1" stop-color="#8a8a8a"/></linearGradient></defs><!-- doc icon -->
<rect x="29" y="215.5" width="11.5" height="14" fill="#f0f0f0" stroke="#d2d2d2"/>
<rect x="29" y="229" width="11.5" height="1" fill="#a0a0a0"/>
<circle cx="36.5" cy="221" r="3" fill="#e01a10"/>
<rect x="31" y="222" width="6.5" height="6" fill="#3550c8"/><rect x="37.5" y="222" width="1" height="6" fill="#2030b0"/>
<rect x="31" y="222" width="6.5" height="0.8" fill="#1a2a90"/>
<ellipse cx="59" cy="247.5" rx="3.5" ry="1" fill="#999" opacity="0.5"/><polygon points="48,238.5 55.5,239 55.5,247.5 48,246.5" fill="url(#tgray)"/><polygon points="55.5,239 59,236 59,244.5 55.5,247.5" fill="#8a8a8a"/><polygon points="48,238.5 51,236 59,236 55.5,239" fill="#c8c8c8"/><polygon points="48,238.5 51,236 59,236 59,244.5 55.5,247.5 48,246.5" fill="none" stroke="#777" stroke-width="0.6" stroke-linejoin="round"/><polyline points="48,238.5 55.5,239 55.5,247.5" fill="none" stroke="#777" stroke-width="0.42"/><polyline points="55.5,239 59,236" fill="none" stroke="#777" stroke-width="0.42"/><ellipse cx="59" cy="266.5" rx="3.5" ry="1" fill="#999" opacity="0.5"/><polygon points="48,257.5 55.5,258 55.5,266.5 48,265.5" fill="url(#tgray)"/><polygon points="55.5,258 59,255 59,263.5 55.5,266.5" fill="#8a8a8a"/><polygon points="48,257.5 51,255 59,255 55.5,258" fill="#c8c8c8"/><polygon points="48,257.5 51,255 59,255 59,263.5 55.5,266.5 48,265.5" fill="none" stroke="#777" stroke-width="0.6" stroke-linejoin="round"/><polyline points="48,257.5 55.5,258 55.5,266.5" fill="none" stroke="#777" stroke-width="0.42"/><polyline points="55.5,258 59,255" fill="none" stroke="#777" stroke-width="0.42"/><polygon points="49.5,277.0 57.0,277.5 57.0,286.0 49.5,285.0" fill="#0820ff"/><polygon points="57.0,277.5 60.5,274.5 60.5,283.0 57.0,286.0" fill="#0018e0"/><polygon points="49.5,277.0 52.5,274.5 60.5,274.5 57.0,277.5" fill="#2a48ff"/><polygon points="49.5,277.0 52.5,274.5 60.5,274.5 60.5,283.0 57.0,286.0 49.5,285.0" fill="none" stroke="#000" stroke-width="1.3" stroke-linejoin="round"/><polyline points="49.5,277.0 57.0,277.5 57.0,286.0" fill="none" stroke="#000" stroke-width="0.9099999999999999"/><polyline points="57.0,277.5 60.5,274.5" fill="none" stroke="#000" stroke-width="0.9099999999999999"/><polygon points="49.5,296.0 57.0,296.5 57.0,305.0 49.5,304.0" fill="#0820ff"/><polygon points="57.0,296.5 60.5,293.5 60.5,302.0 57.0,305.0" fill="#0018e0"/><polygon points="49.5,296.0 52.5,293.5 60.5,293.5 57.0,296.5" fill="#2a48ff"/><polygon points="49.5,296.0 52.5,293.5 60.5,293.5 60.5,302.0 57.0,305.0 49.5,304.0" fill="none" stroke="#000" stroke-width="1.3" stroke-linejoin="round"/><polyline points="49.5,296.0 57.0,296.5 57.0,305.0" fill="none" stroke="#000" stroke-width="0.9099999999999999"/><polyline points="57.0,296.5 60.5,293.5" fill="none" stroke="#000" stroke-width="0.9099999999999999"/><polygon points="49.5,315.0 57.0,315.5 57.0,324.0 49.5,323.0" fill="#0820ff"/><polygon points="57.0,315.5 60.5,312.5 60.5,321.0 57.0,324.0" fill="#0018e0"/><polygon points="49.5,315.0 52.5,312.5 60.5,312.5 57.0,315.5" fill="#2a48ff"/><polygon points="49.5,315.0 52.5,312.5 60.5,312.5 60.5,321.0 57.0,324.0 49.5,323.0" fill="none" stroke="#000" stroke-width="1.3" stroke-linejoin="round"/><polyline points="49.5,315.0 57.0,315.5 57.0,324.0" fill="none" stroke="#000" stroke-width="0.9099999999999999"/><polyline points="57.0,315.5 60.5,312.5" fill="none" stroke="#000" stroke-width="0.9099999999999999"/><polygon points="49.5,334.0 57.0,334.5 57.0,343.0 49.5,342.0" fill="#0820ff"/><polygon points="57.0,334.5 60.5,331.5 60.5,340.0 57.0,343.0" fill="#0018e0"/><polygon points="49.5,334.0 52.5,331.5 60.5,331.5 57.0,334.5" fill="#2a48ff"/><polygon points="49.5,334.0 52.5,331.5 60.5,331.5 60.5,340.0 57.0,343.0 49.5,342.0" fill="none" stroke="#000" stroke-width="1.3" stroke-linejoin="round"/><polyline points="49.5,334.0 57.0,334.5 57.0,343.0" fill="none" stroke="#000" stroke-width="0.9099999999999999"/><polyline points="57.0,334.5 60.5,331.5" fill="none" stroke="#000" stroke-width="0.9099999999999999"/><polygon points="49.5,353.0 57.0,353.5 57.0,362.0 49.5,361.0" fill="#0820ff"/><polygon points="57.0,353.5 60.5,350.5 60.5,359.0 57.0,362.0" fill="#0018e0"/><polygon points="49.5,353.0 52.5,350.5 60.5,350.5 57.0,353.5" fill="#2a48ff"/><polygon points="49.5,353.0 52.5,350.5 60.5,350.5 60.5,359.0 57.0,362.0 49.5,361.0" fill="none" stroke="#000" stroke-width="1.3" stroke-linejoin="round"/><polyline points="49.5,353.0 57.0,353.5 57.0,362.0" fill="none" stroke="#000" stroke-width="0.9099999999999999"/><polyline points="57.0,353.5 60.5,350.5" fill="none" stroke="#000" stroke-width="0.9099999999999999"/><polygon points="49.5,372.0 57.0,372.5 57.0,381.0 49.5,380.0" fill="#0820ff"/><polygon points="57.0,372.5 60.5,369.5 60.5,378.0 57.0,381.0" fill="#0018e0"/><polygon points="49.5,372.0 52.5,369.5 60.5,369.5 57.0,372.5" fill="#2a48ff"/><polygon points="49.5,372.0 52.5,369.5 60.5,369.5 60.5,378.0 57.0,381.0 49.5,380.0" fill="none" stroke="#000" stroke-width="1.3" stroke-linejoin="round"/><polyline points="49.5,372.0 57.0,372.5 57.0,381.0" fill="none" stroke="#000" stroke-width="0.9099999999999999"/><polyline points="57.0,372.5 60.5,369.5" fill="none" stroke="#000" stroke-width="0.9099999999999999"/><polygon points="49.5,391.0 57.0,391.5 57.0,400.0 49.5,399.0" fill="#0820ff"/><polygon points="57.0,391.5 60.5,388.5 60.5,397.0 57.0,400.0" fill="#0018e0"/><polygon points="49.5,391.0 52.5,388.5 60.5,388.5 57.0,391.5" fill="#2a48ff"/><polygon points="49.5,391.0 52.5,388.5 60.5,388.5 60.5,397.0 57.0,400.0 49.5,399.0" fill="none" stroke="#000" stroke-width="1.3" stroke-linejoin="round"/><polyline points="49.5,391.0 57.0,391.5 57.0,400.0" fill="none" stroke="#000" stroke-width="0.9099999999999999"/><polyline points="57.0,391.5 60.5,388.5" fill="none" stroke="#000" stroke-width="0.9099999999999999"/><polygon points="49.5,410.0 57.0,410.5 57.0,419.0 49.5,418.0" fill="#0820ff"/><polygon points="57.0,410.5 60.5,407.5 60.5,416.0 57.0,419.0" fill="#0018e0"/><polygon points="49.5,410.0 52.5,407.5 60.5,407.5 57.0,410.5" fill="#2a48ff"/><polygon points="49.5,410.0 52.5,407.5 60.5,407.5 60.5,416.0 57.0,419.0 49.5,418.0" fill="none" stroke="#000" stroke-width="1.3" stroke-linejoin="round"/><polyline points="49.5,410.0 57.0,410.5 57.0,419.0" fill="none" stroke="#000" stroke-width="0.9099999999999999"/><polyline points="57.0,410.5 60.5,407.5" fill="none" stroke="#000" stroke-width="0.9099999999999999"/></svg>

<!-- splitter dots -->
<div class="a" style="left:418px;top:413px;width:4px;height:1px;background:#c4c0b8"></div>
<div class="a" style="left:418px;top:416px;width:4px;height:1px;background:#c4c0b8"></div>
<div class="a" style="left:418px;top:419px;width:4px;height:1px;background:#c4c0b8"></div>
<div class="a" style="left:206px;top:529px;width:1px;height:4px;background:#b0aca4"></div>
<div class="a" style="left:209px;top:529px;width:1px;height:4px;background:#b0aca4"></div>
<div class="a" style="left:212px;top:529px;width:1px;height:4px;background:#b0aca4"></div>
<!-- property frame -->
<div class="a" style="left:3px;top:534px;width:411px;height:153px;border:1px solid #c4c0b8;background:#f2f1f0"></div>
<div class="a" style="left:5px;top:536px;width:408px;height:151px;border:1px solid #b9b5ad;background:#fff"></div>
<div class="a" style="left:6px;top:537px;width:406px;height:25px;border-bottom:1px solid #c0bcb4;background:linear-gradient(#fbfbfa,#ecebe9)"></div>
<div class="a" style="left:105px;top:537px;width:1px;height:24px;background:#d4d0c8"></div>
<div class="a txt" style="left:10px;top:542px">Property</div>
<div class="a txt" style="left:110px;top:542px">Value</div>
<!-- view/data tabs -->
<svg class="a" style="left:0;top:686px" width="110" height="34">
<path d="M53.5 2.5 L62 26 Q64 29.5 68 29.5 L85 29.5 Q88.5 29.5 90 26 L98 2.5" fill="#f0efee" stroke="#4a4a4a" stroke-width="1"/>
<path d="M3 1.5 L12 26 Q14.5 30.5 19 30.5 L37 30.5 Q41 30.5 43 26 L52 1.5" fill="#fff" stroke="#3a3a3a" stroke-width="1"/>
</svg>
<div class="a txt" style="left:12px;top:694px">View</div>
<div class="a txt" style="left:61px;top:693px">Data</div>

<!-- doc tab bar -->
<div class="a" style="left:423px;top:686px;width:187px;height:33px;border:1px solid #c4c0b8;border-top:none;border-radius:0 0 4px 4px;background:linear-gradient(#f6f6f5,#fafafa)"></div>
<svg class="a" style="left:430px;top:694px" width="16" height="16">
<path d="M1 1.5 H8 V4 H3.5 V6.5 H6.5 V9 H3.5 V14.5 H1 Z" fill="#e82a10"/>
<g transform="translate(9.5,9.5)">
<circle r="4.6" fill="#1a3aa8"/>
<g fill="#1a3aa8"><rect x="-1.2" y="-6.3" width="2.4" height="3"/><rect x="-1.2" y="3.3" width="2.4" height="3"/><rect x="-6.3" y="-1.2" width="3" height="2.4"/><rect x="3.3" y="-1.2" width="3" height="2.4"/>
<rect x="-1.2" y="-6.3" width="2.4" height="3" transform="rotate(45)"/><rect x="-1.2" y="3.3" width="2.4" height="3" transform="rotate(45)"/><rect x="-6.3" y="-1.2" width="3" height="2.4" transform="rotate(45)"/><rect x="3.3" y="-1.2" width="3" height="2.4" transform="rotate(45)"/></g>
<circle r="1.8" fill="#f4f4f4"/>
</g></svg>
<div class="a txt" style="left:454px;top:695px;letter-spacing:0.2px">T08-ejemplo-ini : 1</div>
<svg class="a" style="left:585px;top:696px" width="14" height="14"><path d="M2 2 L12 12 M12 2 L2 12" stroke="#555" stroke-width="3"/></svg>
<div class="a" style="left:610px;top:719px;width:692px;height:1px;background:#cdc9c1"></div>
<!-- status -->
<div class="a txt" style="left:1153px;top:726px;font-size:13.5px;letter-spacing:0.6px">115.99 x 75.61 mm</div>
<svg class="a" style="left:1288px;top:734px" width="14" height="14"><g fill="#c8c5bf"><rect x="10" y="2" width="2" height="2"/><rect x="7" y="5" width="2" height="2"/><rect x="10" y="5" width="2" height="2"/><rect x="4" y="8" width="2" height="2"/><rect x="7" y="8" width="2" height="2"/><rect x="10" y="8" width="2" height="2"/><rect x="1" y="11" width="2" height="2"/><rect x="4" y="11" width="2" height="2"/><rect x="7" y="11" width="2" height="2"/><rect x="10" y="11" width="2" height="2"/></g></svg>
</body></html>
